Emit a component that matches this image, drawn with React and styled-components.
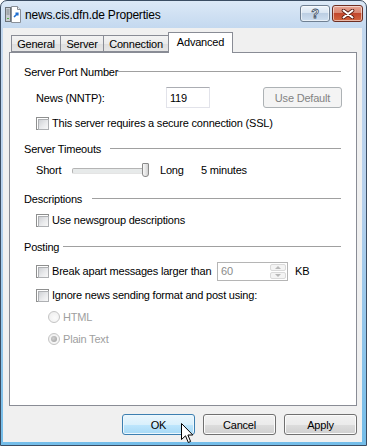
import React from "react"
import styled, { createGlobalStyle } from "styled-components"

const GlobalStyle = createGlobalStyle`
  html, body {
    margin: 0;
    padding: 0;
    background: #ffffff;
  }
  body {
    font-family: "Liberation Sans", Arial, sans-serif;
    font-size: 11px;
    letter-spacing: -0.2px;
    color: #000;
  }
  * {
    box-sizing: border-box;
  }
`

const Window = styled.div`
  position: relative;
  width: 367px;
  height: 446px;
  display: flex;
  flex-direction: column;
  border: 1px solid #3b4d63;
  border-radius: 7px 7px 0 0;
  background: linear-gradient(180deg, #dce9f7 0px, #c3d8ef 28px, #b7d1ed 200px, #74bde9 100%);
  overflow: hidden;
`

const TitleBar = styled.div`
  height: 27px;
  display: flex;
  align-items: center;
  padding: 0 3px 0 4px;
`

const TitleText = styled.span`
  margin-left: 4px;
  font-size: 12px;
  letter-spacing: -0.2px;
  color: #000;
  flex: 1;
  white-space: nowrap;
`

const CaptionButton = styled.div`
  align-self: flex-start;
  margin-top: 4px;
  margin-left: ${(p) => (p.$close ? 2 : 0)}px;
  width: ${(p) => (p.$close ? 31 : 30)}px;
  height: 17px;
  border: 1px solid ${(p) => (p.$close ? "#6e2e22" : "#6f7f92")};
  border-radius: 3px;
  display: flex;
  align-items: center;
  justify-content: center;
  background: ${(p) =>
    p.$close
      ? "linear-gradient(180deg, #e8a493 0%, #d88873 45%, #c2472d 50%, #d3663f 100%)"
      : "linear-gradient(180deg, #eef4fb 0%, #d9e5f2 45%, #bccee3 50%, #cfdff0 100%)"};
  box-shadow: inset 0 0 0 1px rgba(255, 255, 255, 0.55);
  font-family: "Liberation Sans", Arial, sans-serif;
  font-weight: bold;
  font-size: 13px;
  color: #fff;
  -webkit-text-stroke: 0.8px #445468;
`

const Client = styled.div`
  flex: 1;
  margin: 0 4px 3px 2px;
  background: #f0f0f0;
  padding: 0 5px 7px 6px;
  display: flex;
  flex-direction: column;
`

const TabStrip = styled.div`
  height: 24px;
  display: flex;
  align-items: flex-end;
  padding-left: 2px;
`

const Tab = styled.div`
  position: relative;
  z-index: ${(p) => (p.$active ? 2 : 1)};
  width: ${(p) => p.$w}px;
  height: ${(p) => (p.$active ? 21 : 17)}px;
  margin-right: -1px;
  margin-bottom: ${(p) => (p.$active ? -1 : 0)}px;
  border: 1px solid #898c95;
  border-bottom: ${(p) => (p.$active ? "none" : "1px solid #898c95")};
  background: ${(p) =>
    p.$active ? "#ffffff" : "linear-gradient(180deg, #f3f3f3 0%, #ebebeb 50%, #dedede 51%, #e6e6e6 100%)"};
  display: flex;
  align-items: center;
  justify-content: center;
  padding-bottom: ${(p) => (p.$active ? 3 : 0)}px;
  white-space: nowrap;
`

const Panel = styled.div`
  position: relative;
  z-index: 1;
  height: 354px;
  border: 1px solid #898c95;
  background: #ffffff;
  padding: 11px 15px 0 14px;
  display: flex;
  flex-direction: column;
`

const GroupHeader = styled.div`
  display: flex;
  align-items: center;
  height: 16px;
  margin-top: ${(p) => p.$mt || 0}px;
`

const HeaderText = styled.span`
  width: ${(p) => p.$w}px;
  flex-shrink: 0;
  white-space: nowrap;
`

const HeaderLine = styled.div`
  flex: 1;
  height: 1px;
  margin-top: -1px;
  background: #a0a0a0;
`

const Row = styled.div`
  display: flex;
  align-items: center;
  height: ${(p) => p.$h || 16}px;
  margin-top: ${(p) => p.$mt || 0}px;
  padding-left: ${(p) => p.$indent || 12}px;
  color: ${(p) => (p.$disabled ? "#a0a0a0" : "#000")};
  white-space: nowrap;
`

const FieldLabel = styled.span`
  width: ${(p) => p.$w}px;
  flex-shrink: 0;
  overflow: visible;
`

const TextInput = styled.div`
  width: 44px;
  height: 21px;
  border: 1px solid #e2e3ea;
  border-top-color: #abadb3;
  background: #fff;
  display: flex;
  align-items: center;
  padding-left: 3px;
`

const SmallButton = styled.div`
  margin-left: auto;
  margin-right: -1px;
  width: 79px;
  height: 21px;
  border: 1px solid #adb2b5;
  border-radius: 3px;
  background: #f4f4f4;
  color: #838383;
  display: flex;
  align-items: center;
  justify-content: center;
`

const CheckBox = styled.span`
  width: 13px;
  height: 13px;
  flex-shrink: 0;
  border: 1px solid #8e8f8f;
  background: #fff;
  padding: 1px;
  margin-right: 3px;

  &::after {
    content: "";
    display: block;
    width: 9px;
    height: 9px;
    border: 1px solid #aeb0b3;
    background: linear-gradient(135deg, #cfd1d5 0%, #e9eaec 55%, #f8f8f8 100%);
  }
`

const Radio = styled.span`
  width: 12px;
  height: 12px;
  flex-shrink: 0;
  border-radius: 50%;
  border: 1px solid #c4c4c4;
  background: radial-gradient(circle at 60% 60%, #fbfbfb 0%, #ececec 100%);
  margin-right: 3px;
  display: flex;
  align-items: center;
  justify-content: center;

  &::after {
    content: "";
    display: ${(p) => (p.$checked ? "block" : "none")};
    width: 6px;
    height: 6px;
    border-radius: 50%;
    background: radial-gradient(circle at 40% 40%, #d0d0d0 0%, #9c9c9c 100%);
  }
`

const SliderWord = styled.span`
  width: ${(p) => p.$w}px;
  flex-shrink: 0;
`

const SliderTrack = styled.div`
  position: relative;
  width: 77px;
  height: 18px;
  margin-right: 11px;
  flex-shrink: 0;

  &::before {
    content: "";
    position: absolute;
    left: 0;
    right: 3px;
    top: 7px;
    height: 4px;
    border: 1px solid #b4b4b4;
    border-bottom-color: #e4e4e4;
    border-radius: 2px;
    background: #e7eaea;
  }
`

const SliderThumb = styled.div`
  position: absolute;
  right: 0;
  top: 2px;
  width: 7px;
  height: 14px;
  border: 1px solid #8a8a8a;
  border-radius: 1px 1px 3px 3px;
  background: linear-gradient(90deg, #f7f7f7 0%, #e3e3e3 60%, #cfcfcf 100%);
`

const SpinBox = styled.div`
  width: 71px;
  height: 19px;
  margin-right: 7px;
  flex-shrink: 0;
  border: 1px solid #b5b5b5;
  background: #fff;
  display: flex;
`

const SpinValue = styled.span`
  flex: 1;
  padding-left: 3px;
  color: #8a8a8a;
  display: flex;
  align-items: center;
`

const SpinButtons = styled.div`
  width: 17px;
  display: flex;
  flex-direction: column;
  padding: 1px 1px 1px 0;
  gap: 1px;
`

const SpinHalf = styled.div`
  flex: 1;
  border: 1px solid #dadada;
  border-radius: 2px;
  background: #f4f4f4;
  display: flex;
  align-items: center;
  justify-content: center;

  &::after {
    content: "";
    width: 0;
    height: 0;
    border-left: 3px solid transparent;
    border-right: 3px solid transparent;
    ${(p) => (p.$down ? "border-top: 3px solid #b8b8b8;" : "border-bottom: 3px solid #b8b8b8;")}
  }
`

const ButtonRow = styled.div`
  margin-top: 8px;
  display: flex;
  justify-content: flex-end;
  gap: 8px;
`

const DialogButton = styled.div`
  width: 73px;
  height: 21px;
  border: 1px solid ${(p) => (p.$hot ? "#3c7fb1" : "#707070")};
  border-radius: 3px;
  box-shadow: inset 0 0 0 1px ${(p) => (p.$hot ? "#ecf7fd" : "#fbfbfb")};
  background: ${(p) =>
    p.$hot
      ? "linear-gradient(180deg, #eaf6fd 0%, #d9f0fc 50%, #bee6fd 51%, #a7d9f5 100%)"
      : "linear-gradient(180deg, #f2f2f2 0%, #ebebeb 50%, #dddddd 51%, #cfcfcf 100%)"};
  display: flex;
  align-items: center;
  justify-content: center;
`

const Cursor = styled.svg`
  position: absolute;
  left: 180px;
  top: 422px;
  z-index: 10;
`

const AppIcon = () => (
  <svg width="16" height="17" viewBox="0 0 16 17">
    <rect x="0.5" y="1.5" width="5" height="14" fill="#c9ccd0" stroke="#6d7378" />
    <line x1="1.5" y1="4" x2="4.5" y2="4" stroke="#7f868c" />
    <line x1="1.5" y1="6" x2="4.5" y2="6" stroke="#7f868c" />
    <line x1="1.5" y1="8" x2="4.5" y2="8" stroke="#7f868c" />
    <rect x="2" y="12" width="2" height="1" fill="#57b04a" />
    <path d="M6.5 0.5 H12.5 L15.5 3.5 V16.5 H6.5 Z" fill="#ffffff" stroke="#8a9099" />
    <path d="M12.5 0.5 V3.5 H15.5" fill="#e9edf2" stroke="#8a9099" />
    <path d="M9 11 L12.5 7.5 M10.5 7.2 H12.8 V9.5" stroke="#1f6fd1" strokeWidth="1.6" fill="none" />
  </svg>
)

const CloseGlyph = () => (
  <svg width="14" height="10" viewBox="0 0 14 10">
    <path d="M2.5 1.5 L11.5 8.5 M11.5 1.5 L2.5 8.5" stroke="#5b1d12" strokeWidth="3.6" strokeLinecap="round" />
    <path d="M2.5 1.5 L11.5 8.5 M11.5 1.5 L2.5 8.5" stroke="#ffffff" strokeWidth="2" strokeLinecap="round" />
  </svg>
)

const Check = ({ children, mt }) => (
  <Row $mt={mt}>
    <CheckBox />
    {children}
  </Row>
)

const Option = ({ children, mt, checked }) => (
  <Row $mt={mt} $indent={24} $disabled>
    <Radio $checked={checked} />
    {children}
  </Row>
)

export default function App() {
  return (
    <>
      <GlobalStyle />
      <Window>
        <TitleBar>
          <AppIcon />
          <TitleText>news.cis.dfn.de Properties</TitleText>
          <CaptionButton>?</CaptionButton>
          <CaptionButton $close>
            <CloseGlyph />
          </CaptionButton>
        </TitleBar>

        <Client>
          <TabStrip>
            <Tab $w={50}>General</Tab>
            <Tab $w={44}>Server</Tab>
            <Tab $w={66}>Connection</Tab>
            <Tab $w={65} $active>Advanced</Tab>
          </TabStrip>

          <Panel>
            <GroupHeader>
              <HeaderText $w={93}>Server Port Number</HeaderText>
              <HeaderLine />
            </GroupHeader>
            <Row $mt={7} $h={21}>
              <FieldLabel $w={130}>News (NNTP):</FieldLabel>
              <TextInput>119</TextInput>
              <SmallButton>Use Default</SmallButton>
            </Row>
            <Check mt={7}>This server requires a secure connection (SSL)</Check>

            <GroupHeader $mt={10}>
              <HeaderText $w={86}>Server Timeouts</HeaderText>
              <HeaderLine />
            </GroupHeader>
            <Row $mt={4} $h={18}>
              <SliderWord $w={36}>Short</SliderWord>
              <SliderTrack>
                <SliderThumb />
              </SliderTrack>
              <SliderWord $w={41}>Long</SliderWord>
              <span>5 minutes</span>
            </Row>

            <GroupHeader $mt={12}>
              <HeaderText $w={68}>Descriptions</HeaderText>
              <HeaderLine />
            </GroupHeader>
            <Check mt={5}>Use newsgroup descriptions</Check>

            <GroupHeader $mt={11}>
              <HeaderText $w={39}>Posting</HeaderText>
              <HeaderLine />
            </GroupHeader>
            <Row $mt={6} $h={20}>
              <CheckBox />
              <FieldLabel $w={165}>Break apart messages larger than</FieldLabel>
              <SpinBox>
                <SpinValue>60</SpinValue>
                <SpinButtons>
                  <SpinHalf />
                  <SpinHalf $down />
                </SpinButtons>
              </SpinBox>
              KB
            </Row>
            <Check mt={6}>Ignore news sending format and post using:</Check>
            <Option mt={6}>HTML</Option>
            <Option mt={6} checked>
              Plain Text
            </Option>
          </Panel>

          <ButtonRow>
            <DialogButton $hot>OK</DialogButton>
            <DialogButton>Cancel</DialogButton>
            <DialogButton>Apply</DialogButton>
          </ButtonRow>
        </Client>

        <Cursor width="13" height="21" viewBox="0 0 13 21">
          <path
            d="M0.5 0.5 V16.5 L4.5 12.8 L7.3 19.5 L9.6 18.5 L6.9 12 H11.8 Z"
            fill="#ffffff"
            stroke="#000000"
            strokeLinejoin="round"
          />
        </Cursor>
      </Window>
    </>
  )
}
